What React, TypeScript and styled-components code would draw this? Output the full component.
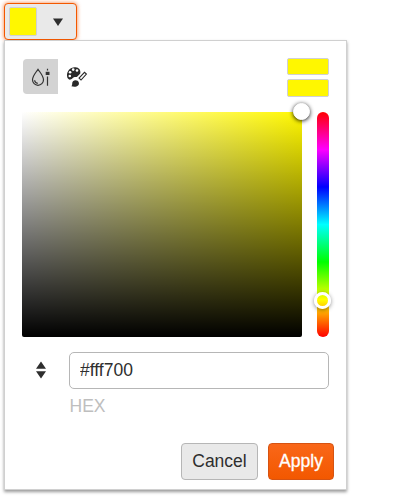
import React from "react";
import styled, { createGlobalStyle } from "styled-components";

const GlobalStyle = createGlobalStyle`
  * { box-sizing: border-box; }
  body {
    margin: 0;
    background: #fff;
    color: #2e2e2e;
    font: 17.5px/25px "Liberation Sans", Arial, sans-serif;
  }
  svg { display: block; }
`;

const Page = styled.main`
  min-height: 499px;
  padding: 3px 0 0 4px;
`;

const Picker = styled.button`
  display: flex;
  align-items: center;
  width: 73px;
  height: 37px;
  padding: 0 0 0 4px;
  gap: 16px;
  background: #e9e9e9;
  border: 1px solid #f35800;
  border-radius: 4px;
  box-shadow: 0 0 4px rgba(243, 88, 0, 0.75);
`;

const Swatch = styled.span<{ $width: number; $height: number }>`
  display: block;
  width: ${(p) => p.$width}px;
  height: ${(p) => p.$height}px;
  background: #fff700;
  border: 1px solid #d0d0d4;
  border-radius: 2px;
`;

const Popup = styled.section`
  position: relative;
  width: 343px;
  height: 450px;
  padding: 17px 12px 9px 17px;
  background: #fff;
  border: 1px solid #d0d0d0;
  box-shadow: 0 2px 3px rgba(0, 0, 0, 0.4);
`;

const Header = styled.header`
  display: flex;
  justify-content: space-between;
  width: 307px;
  height: 54px;
`;

const Views = styled.div`
  display: flex;
  padding: 1px 0 0 1px;
`;

const ViewButton = styled.button<{ $selected?: boolean }>`
  display: flex;
  width: 35px;
  height: 35px;
  padding: 0;
  border: 0;
  border-radius: 4px 0 0 4px;
  background: ${(p) => (p.$selected ? "#d3d3d3" : "transparent")};
`;

const Previews = styled.div`
  display: flex;
  flex-direction: column;
  gap: 4px;
`;

const Gradient = styled.div`
  display: flex;
  gap: 15px;
  height: 225px;
`;

const Canvas = styled.div`
  position: relative;
  width: 280px;
  border-radius: 2px;
  background: linear-gradient(to top, #000, transparent),
    linear-gradient(to right, #fff, #fff700);
`;

const HueTrack = styled.div`
  position: relative;
  width: 12px;
  border-radius: 6px;
  background: linear-gradient(to bottom, #f00, #f0f, #00f, #0ff, #0f0, #ff0, #f00);
`;

const Handle = styled.span<{ $x: number; $y: number; $ring?: boolean }>`
  position: absolute;
  left: ${(p) => p.$x}px;
  top: ${(p) => p.$y}px;
  width: 17px;
  height: 17px;
  border: ${(p) => (p.$ring ? 3 : 1)}px solid #fff;
  border-radius: 50%;
  background: ${(p) => (p.$ring ? "transparent" : "#fff")};
  box-shadow: 0 1px 4px rgba(0, 0, 0, ${(p) => (p.$ring ? 0.45 : 0.9)});
`;

const Fields = styled.div`
  display: grid;
  grid-template-columns: 37px 260px;
  gap: 5px 10px;
  margin-top: 15px;
`;

const FormatToggle = styled.button`
  display: flex;
  align-items: center;
  justify-content: center;
  padding: 0 0 1px;
  border: 0;
  background: transparent;
`;

const HexInput = styled.input`
  width: 260px;
  height: 37px;
  padding: 0 10px;
  color: #2e2e2e;
  font: inherit;
  background: #fff;
  border: 1px solid #b6b6b6;
  border-radius: 5px;
  outline: none;
`;

const FieldLabel = styled.label`
  grid-column: 2;
  padding-left: 0.5px;
  color: #bebebe;
`;

const Actions = styled.footer`
  display: flex;
  justify-content: flex-end;
  gap: 10px;
  margin-top: 24px;
`;

const Action = styled.button<{ $primary?: boolean }>`
  width: ${(p) => (p.$primary ? 66 : 77)}px;
  height: 37px;
  padding: 0;
  font: inherit;
  color: ${(p) => (p.$primary ? "#fff" : "#2e2e2e")};
  border: 1px solid ${(p) => (p.$primary ? "#d65312" : "#b6b6b6")};
  border-radius: 4px;
  background: ${(p) => (p.$primary ? "linear-gradient(#f96719, #f35800)" : "#e9e9e9")};
  ${(p) => p.$primary && "-webkit-text-stroke: 0.3px #fff;"}
`;

const DropIcon = () => (
  <svg width="35" height="35" viewBox="0 0 35 35" fill="none" stroke="#333" strokeWidth="1.2">
    <path d="M15 10.3c-2.2 3.3-5.5 6.7-5.5 10.5a5.5 5.5 0 0 0 11 0c0-3.8-3.3-7.2-5.5-10.5Z" />
    <path d="M11.6 21.3c.2 1.7 1.5 2.9 3.2 3.1" />
    <path d="M24.5 9.8v1.8M24.5 17.5v9.2" />
    <path d="M22.7 12.8h3.8v3.2h-3.8z" fill="#333" stroke="none" />
  </svg>
);

const PaletteIcon = () => (
  <svg width="35" height="35" viewBox="0 0 35 35">
    <path
      d="M17.5 8.2C12.5 7.7 8.7 12 9 16.8c.2 2.8 1.6 4.2 3.5 3.8 2-.4 2.1-2.3 4.1-2.5 1.3-.1 1.8.3 2.8-.6l2.9-3.1C22.8 10.7 21 8.6 17.5 8.2Z"
      fill="#292929"
    />
    <g fill="#fff">
      <circle cx="11.8" cy="17" r="1.3" />
      <circle cx="12.1" cy="13.3" r="1.3" />
      <circle cx="15.2" cy="10.6" r="1.3" />
      <circle cx="19" cy="11.5" r="1.3" />
    </g>
    <path d="m21 19.1 5.5-5.8 1.9 1.8-5.4 5.9z" fill="#fff" stroke="#292929" strokeWidth="1.1" />
    <path d="M13.4 27.3c1.4-1.3.1-3.3 1.6-5 1.9-1.9 5.2-1.1 5.8 1.1.9 3.1-2.4 5.3-7.4 3.9Z" fill="#292929" />
  </svg>
);

export default function App() {
  return (
    <>
      <GlobalStyle />
      <Page>
        <Picker aria-label="Choose color">
          <Swatch $width={28} $height={29} />
          <svg width="10" height="8" viewBox="0 0 10 8">
            <path d="M0 .5h10L5 8z" fill="#2e2e2e" />
          </svg>
        </Picker>
        <Popup>
          <Header>
            <Views>
              <ViewButton $selected aria-label="Gradient view"><DropIcon /></ViewButton>
              <ViewButton aria-label="Palette view"><PaletteIcon /></ViewButton>
            </Views>
            <Previews>
              <Swatch $width={42} $height={17} />
              <Swatch $width={42} $height={18} />
            </Previews>
          </Header>
          <Gradient>
            <Canvas><Handle $x={271} $y={-9} /></Canvas>
            <HueTrack><Handle $x={-3} $y={179.5} $ring /></HueTrack>
          </Gradient>
          <Fields>
            <FormatToggle aria-label="Toggle format">
              <svg width="10" height="18" viewBox="0 0 10 18" fill="#2e2e2e">
                <path d="M0 7.8 5 .5l5 7.3zM0 10.3h10l-5 7.2z" />
              </svg>
            </FormatToggle>
            <HexInput id="hex" defaultValue="#fff700" />
            <FieldLabel htmlFor="hex">HEX</FieldLabel>
          </Fields>
          <Actions>
            <Action>Cancel</Action>
            <Action $primary>Apply</Action>
          </Actions>
        </Popup>
      </Page>
    </>
  );
}
